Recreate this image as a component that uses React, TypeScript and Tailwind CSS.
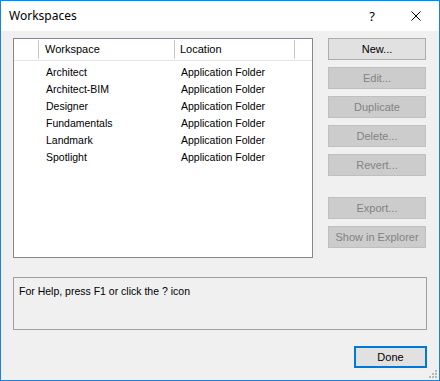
import React from "react";

const rows = ["Architect", "Architect-BIM", "Designer", "Fundamentals", "Landmark", "Spotlight"];

function Btn({ label, enabled = false }: { label: string; enabled?: boolean }) {
  return (
    <div
      className={
        "h-[22px] w-[98px] flex items-center justify-center border text-[11px] " +
        (enabled
          ? "bg-[#e1e1e1] border-[#adadad] text-black"
          : "bg-[#cccccc] border-[#bfbfbf] text-[#838383]")
      }
    >
      {label}
    </div>
  );
}

export default function App() {
  return (
    <div
      className="w-[440px] h-[381px] border border-[#1883d7] flex flex-col bg-[#f0f0f0] overflow-hidden"
      style={{ fontFamily: '"Liberation Sans", Arial, sans-serif' }}
    >
      {/* title bar */}
      <div className="h-[30px] bg-white flex items-center shrink-0">
        <div
          className="pl-[8px] text-[12px] text-black flex-1 leading-none"
          style={{ fontFamily: '"Noto Sans", "Open Sans", sans-serif' }}
        >
          Workspaces
        </div>
        <div
          className="text-[13px] text-black mr-[36px] leading-none"
          style={{ fontFamily: '"Noto Sans", sans-serif' }}
        >
          ?
        </div>
        <svg width="10" height="10" viewBox="0 0 10 10" className="mr-[18px]">
          <path d="M0.5 0.5 L9.5 9.5 M9.5 0.5 L0.5 9.5" stroke="#000" strokeWidth="1" />
        </svg>
      </div>

      {/* body */}
      <div className="flex-1 flex flex-col pt-[7px] pl-[12px] pr-[12px] relative">
        <div className="flex gap-[15px]">
          {/* list */}
          <div className="w-[300px] h-[220px] border border-[#828790] bg-white flex flex-col text-[10.5px] text-black">
            <div className="h-[22px] flex items-center border-b border-[#e5e5e5] shrink-0">
              <div className="w-[25px] h-[19px] border-r border-[#c8c8c8]" />
              <div className="w-[136px] h-[19px] border-r border-[#c8c8c8] pl-[6px] flex items-center text-[11px]">
                Workspace
              </div>
              <div className="w-[120px] h-[19px] border-r border-[#c8c8c8] pl-[5px] flex items-center text-[11px]">
                Location
              </div>
            </div>
            <div className="pt-[3px]">
              {rows.map((r) => (
                <div key={r} className="h-[17px] flex items-center">
                  <div className="w-[32px]" />
                  <div className="w-[135px]">{r}</div>
                  <div>Application Folder</div>
                </div>
              ))}
            </div>
          </div>

          {/* buttons */}
          <div className="flex flex-col gap-[7px]">
            <Btn label="New..." enabled />
            <Btn label="Edit..." />
            <Btn label="Duplicate" />
            <Btn label="Delete..." />
            <Btn label="Revert..." />
            <div className="h-[7px]" />
            <Btn label="Export..." />
            <Btn label="Show in Explorer" />
          </div>
        </div>

        {/* help box */}
        <div className="mt-[19px] h-[53px] border border-[#a0a0a0] px-[5px] pt-[6px] text-[10.5px] text-black">
          For Help, press F1 or click the ? icon
        </div>

        <div className="flex justify-end mt-[16px]">
          <div className="w-[73px] h-[22px] border-2 border-[#0078d7] bg-[#e1e1e1] flex items-center justify-center text-[11px] text-black">
            Done
          </div>
        </div>

        <svg width="10" height="10" viewBox="0 0 10 10" className="absolute right-[1px] bottom-[1px]">
          <rect x="7" y="1" width="2" height="2" fill="#b8b8b8" />
          <rect x="4" y="4" width="2" height="2" fill="#b8b8b8" />
          <rect x="7" y="4" width="2" height="2" fill="#b8b8b8" />
          <rect x="1" y="7" width="2" height="2" fill="#b8b8b8" />
          <rect x="4" y="7" width="2" height="2" fill="#b8b8b8" />
          <rect x="7" y="7" width="2" height="2" fill="#b8b8b8" />
        </svg>
      </div>
    </div>
  );
}
